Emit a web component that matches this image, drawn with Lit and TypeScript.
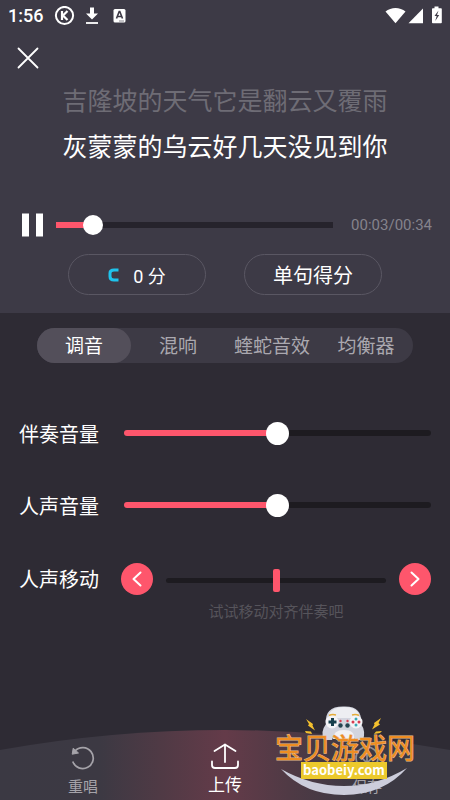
import { LitElement, html, css } from "lit";
import { customElement, property, state } from "lit/decorators.js";
import { classMap } from "lit/directives/class-map.js";
import { styleMap } from "lit/directives/style-map.js";

const base = css`
  :host {
    display: block;
    font-family: Roboto, "Noto Sans CJK SC", sans-serif;
    color: #fff;
  }
  * {
    box-sizing: border-box;
  }
  button {
    font: inherit;
    color: inherit;
    background: none;
    border: 0;
    padding: 0;
    cursor: pointer;
  }
  svg {
    display: block;
  }
`;

const rangeStyles = css`
  .range {
    --fill: calc(var(--thumb) / 2 + (100% - var(--thumb)) * var(--ratio));
    appearance: none;
    -webkit-appearance: none;
    display: block;
    flex: 1;
    width: 100%;
    min-width: 0;
    height: 24px;
    margin: 0;
    background: none;
  }
  .range::-webkit-slider-runnable-track {
    height: 6px;
    border-radius: var(--round, 3px);
    background: linear-gradient(to right, #fe566c var(--fill), var(--rest) var(--fill));
  }
  .range::-webkit-slider-thumb {
    -webkit-appearance: none;
    width: var(--thumb);
    height: var(--thumb);
    margin-top: calc(3px - var(--thumb) / 2);
    border-radius: 50%;
    background: #fff;
  }
`;

@customElement("status-bar")
class StatusBar extends LitElement {
  static styles = [
    base,
    css`
      .bar {
        display: flex;
        align-items: center;
        height: 31px;
        padding: 0 8px;
      }
      .clock {
        font-size: 18px;
        font-weight: 500;
        line-height: 20px;
        width: 46px;
      }
      .right {
        margin-left: auto;
      }
    `,
  ];

  render() {
    return html`
      <div class="bar">
        <span class="clock">1:56</span>
        <svg width="74" height="20" viewBox="0 0 74 20" fill="none" stroke="#fff" aria-hidden="true">
          <circle cx="10.5" cy="9.500" r="8.600" stroke-width="2" />
          <path d="M8 5v9M13.500 5L9 9.500l4.500 4.500" stroke-width="2.200" />
          <path d="M36 1.500h4v6h4l-6 6-6-6h4z" fill="#fff" stroke="none" />
          <path d="M32 17h12" stroke-width="1.800" />
          <rect x="59.500" y="3" width="12" height="13.500" rx="1.500" fill="#fff" stroke="none" />
          <path d="M62.500 12.500l2.700-7h.6l2.700 7M63.600 10.500h3.800" stroke="#3d3a46" stroke-width="1.600" />
          <path d="M65 15h5" stroke="#8b8991" stroke-width="1" />
        </svg>
        <svg class="right" width="58" height="20" viewBox="0 0 58 20" fill="#fff" aria-hidden="true">
          <path d="M1.500 5.500C7 .8 16 .8 21.500 5.500L11.500 17.200z" />
          <path d="M39 2.500V17.200H24.500z" />
          <path d="M50.500 .5h4v1.700H57q.8 0 .8.800V16.500q0 .8-.8.800h-8.200q-.8 0-.8-.8V3q0-.8.800-.8h1.700z" />
          <path d="M54.500 4.500l-4 5.500h2.200l-1.500 5 4-6h-2.200z" fill="#3d3a46" />
        </svg>
      </div>
    `;
  }
}

@customElement("song-player")
class SongPlayer extends LitElement {
  @state() position = 3.6;
  duration = 34;

  static styles = [
    base,
    rangeStyles,
    css`
      .player {
        display: flex;
        align-items: center;
        height: 24px;
        padding: 0 18px 0 22px;
      }
      .pause {
        width: 21px;
        margin-right: 13px;
      }
      .seek {
        --thumb: 20px;
        --round: 0;
        --rest: #26232c;
      }
      .time {
        margin-left: 18px;
        font-size: 15px;
        line-height: 20px;
        color: #85838c;
      }
    `,
  ];

  private clock(seconds: number) {
    const s = Math.floor(seconds);
    return `${String(Math.floor(s / 60)).padStart(2, "0")}:${String(s % 60).padStart(2, "0")}`;
  }

  render() {
    return html`
      <div class="player">
        <button class="pause" aria-label="暂停">
          <svg width="21" height="24" viewBox="0 0 21 24" fill="#fff"><path d="M0 .5h7v23H0zM14 .5h7v23h-7z" /></svg>
        </button>
        <input
          class="range seek"
          type="range"
          aria-label="播放进度"
          min="0"
          max=${this.duration}
          step="0.1"
          .value=${String(this.position)}
          style=${styleMap({ "--ratio": String(this.position / this.duration) })}
          @input=${(e: Event) => (this.position = Number((e.target as HTMLInputElement).value))}
        />
        <span class="time">${this.clock(this.position)}/${this.clock(this.duration)}</span>
      </div>
    `;
  }
}

@customElement("volume-row")
class VolumeRow extends LitElement {
  @property() label = "";
  @state() value = 50;

  static styles = [
    base,
    rangeStyles,
    css`
      .row {
        display: flex;
        align-items: center;
        gap: 25px;
        height: 32px;
      }
      .name {
        padding-top: 3px;
        font-size: 20px;
        line-height: 32px;
        flex: none;
      }
      .volume {
        --thumb: 23px;
        --rest: #1d1b20;
      }
    `,
  ];

  render() {
    return html`
      <div class="row">
        <label class="name" for="volume">${this.label}</label>
        <input
          id="volume"
          class="range volume"
          type="range"
          .value=${String(this.value)}
          style=${styleMap({ "--ratio": String(this.value / 100) })}
          @input=${(e: Event) => (this.value = Number((e.target as HTMLInputElement).value))}
        />
      </div>
    `;
  }
}

@customElement("voice-shift")
class VoiceShift extends LitElement {
  @state() shift = 0;

  static styles = [
    base,
    css`
      .row {
        display: grid;
        grid-template-columns: auto 32px 1fr 32px;
        column-gap: 13px;
        row-gap: 7px;
        align-items: center;
        padding-top: 2px;
      }
      .name {
        padding-top: 2px;
        font-size: 20px;
        line-height: 30px;
        margin-right: 9px;
      }
      .step {
        width: 32px;
        height: 32px;
        border-radius: 50%;
        background: #fe566c;
      }
      .offset {
        appearance: none;
        -webkit-appearance: none;
        width: 100%;
        min-width: 0;
        height: 24px;
        margin: 2px 0 0;
        background: none;
      }
      .offset::-webkit-slider-runnable-track {
        height: 5px;
        border-radius: 3px;
        background: #1d1b20;
      }
      .offset::-webkit-slider-thumb {
        -webkit-appearance: none;
        width: 7px;
        height: 23px;
        margin-top: -9px;
        border-radius: 2px;
        background: #fe566c;
      }
      .hint {
        grid-column: 3;
        margin: 0;
        text-align: center;
        white-space: nowrap;
        font-size: 15px;
        line-height: 20px;
        color: #56545b;
      }
    `,
  ];

  render() {
    return html`
      <div class="row">
        <label class="name" for="offset">人声移动</label>
        <button class="step" aria-label="提前" @click=${() => (this.shift -= 1)}>
          <svg width="32" height="32" viewBox="0 0 32 32" fill="none" stroke="#fff" stroke-width="2" stroke-linecap="round" stroke-linejoin="round"><path d="M19.500 9.500l-7 6.500 7 6.500" /></svg>
        </button>
        <input
          id="offset"
          class="offset"
          type="range"
          min="-50"
          max="50"
          .value=${String(this.shift)}
          @input=${(e: Event) => (this.shift = Number((e.target as HTMLInputElement).value))}
        />
        <button class="step" aria-label="延后" @click=${() => (this.shift += 1)}>
          <svg width="32" height="32" viewBox="0 0 32 32" fill="none" stroke="#fff" stroke-width="2" stroke-linecap="round" stroke-linejoin="round"><path d="M12.500 9.500l7 6.500-7 6.500" /></svg>
        </button>
        <p class="hint">试试移动对齐伴奏吧</p>
      </div>
    `;
  }
}

@customElement("action-bar")
class ActionBar extends LitElement {
  static styles = [
    base,
    css`
      .bar {
        position: relative;
        height: 71px;
      }
      .arc {
        position: absolute;
        inset: 0;
        width: 100%;
        height: 100%;
      }
      .actions {
        position: relative;
        display: grid;
        grid-template-columns: repeat(3, 1fr);
        height: 100%;
        padding: 0 12px;
      }
      .action {
        display: flex;
        flex-direction: column;
        align-items: center;
        justify-content: flex-end;
        padding-bottom: 3px;
        font-size: 15px;
        line-height: 20px;
        gap: 6px;
        color: #a5a3a9;
      }
      .main {
        font-size: 17px;
        line-height: 24px;
        gap: 3px;
        color: #fff;
      }
    `,
  ];

  render() {
    return html`
      <div class="bar">
        <svg class="arc" viewBox="0 0 450 71" preserveAspectRatio="none" aria-hidden="true">
          <defs>
            <linearGradient id="glow">
              <stop offset="0" stop-color="#3b3943" />
              <stop offset=".22" stop-color="#3c3943" />
              <stop offset=".36" stop-color="#503a45" />
              <stop offset=".5" stop-color="#643b49" />
              <stop offset=".64" stop-color="#503a45" />
              <stop offset=".8" stop-color="#3c3943" />
              <stop offset="1" stop-color="#3b3943" />
            </linearGradient>
          </defs>
          <path d="M0 21Q112 1 225 1T450 21V71H0z" fill="url(#glow)" />
        </svg>
        <div class="actions">
          <button class="action">
            <svg width="26" height="26" viewBox="0 0 26 26" fill="none" stroke="#a5a3a9" stroke-width="1.700">
              <path d="M2.800 16.500A10.500 10.500 0 1 0 5 6" />
              <path d="M3.200 3.200l5.300 4.800-6.300 1.200z" fill="#a5a3a9" stroke-width="1" />
            </svg>
            <span>重唱</span>
          </button>
          <button class="action main">
            <svg width="30" height="28" viewBox="0 0 30 28" fill="none" stroke="#fff" stroke-width="1.800" stroke-linecap="round" stroke-linejoin="round">
              <path d="M15 20V2.500M4.500 9L15 2.500 25.500 9" />
              <path d="M2 19.500V23q0 3 3 3h20q3 0 3-3v-3.500" />
            </svg>
            <span>上传</span>
          </button>
          <button class="action">
            <svg width="26" height="26" viewBox="0 0 26 26" fill="none" stroke="#8f8d95" stroke-width="1.700">
              <circle cx="13" cy="13" r="11" />
              <path d="M13 6v12M8 13l5 5 5-5" />
            </svg>
            <span>保存</span>
          </button>
        </div>
      </div>
    `;
  }
}

@customElement("site-badge")
class SiteBadge extends LitElement {
  static styles = [
    base,
    css`
      .title {
        font: 400 28px "Noto Sans CJK SC", sans-serif;
        fill: #ee8d22;
        stroke: #e6b98a;
        stroke-width: 1;
        paint-order: stroke;
      }
      .domain {
        font: 700 13px "Noto Sans CJK SC", sans-serif;
        fill: #fff;
      }
    `,
  ];

  render() {
    return html`
      <svg width="144" height="96" viewBox="273 704 144 96" role="img" aria-label="宝贝游戏网 baobeiy.com">
        <path d="M281 769Q311 786 344 786T407 768Q383 795 344 795T281 769z" fill="#cccddb" />
        <path d="M326 724Q324 706 344 706.500Q363 706 361 724Q366 731 363 740H355Q352 731 343 731T332 740H324Q320 732 326 724z" fill="#d3d5df" />
        <path d="M329 714Q333 707 344 707T359 714V718H329z" fill="#edeef2" />
        <path d="M333 739Q333 730 344 730T354 739z" fill="#f2f2f4" />
        <circle cx="332" cy="722" r="6.500" fill="#f4f4f7" />
        <circle cx="356" cy="722" r="6.500" fill="#f4f4f7" />
        <path d="M329 715.500q3-1.500 7-.5M352 715q4-1 7 .5" fill="none" stroke="#e5ad3a" stroke-width="1.500" />
        <path d="M332.500 718v8M328.500 722h8" stroke="#173f4c" stroke-width="3" />
        <circle cx="356" cy="719" r="1.500" fill="#39a8b5" />
        <circle cx="356" cy="725" r="1.500" fill="#39a8b5" />
        <circle cx="353" cy="722" r="1.500" fill="#d83c50" />
        <circle cx="359" cy="722" r="1.500" fill="#d83c50" />
        <circle cx="340.500" cy="721" r="1.200" fill="#d83c50" />
        <circle cx="347.500" cy="721" r="1.200" fill="#d83c50" />
        <circle cx="340.500" cy="725.500" r="2.200" fill="#244451" />
        <circle cx="347.500" cy="725.500" r="2.200" fill="#244451" />
        <path d="M306 719l7 5-.5 1.500 2.500 5-7-5 1-1.500zM305 731l6 .5 1 2.500-6-1z" fill="#f3c02e" />
        <path d="M381 718l-7 5 .5 1.500-2.500 5 8-5-1.500-1.500zM382 731l-6 .5-2 2.500 6-1z" fill="#f3c02e" />
        <text class="title" x="275" y="759">宝贝游戏网</text>
        <rect x="301" y="762" width="86" height="17" fill="#ecc92c" />
        <text class="domain" x="344" y="775" text-anchor="middle">baobeiy.com</text>
      </svg>
    `;
  }
}

@customElement("app-root")
class AppRoot extends LitElement {
  @state() tab = 0;
  tabs = ["调音", "混响", "蝰蛇音效", "均衡器"];

  static styles = [
    base,
    css`
      .page {
        position: relative;
        display: flex;
        flex-direction: column;
        min-height: 100vh;
        background: #2e2b34;
      }
      .stage {
        padding-bottom: 18px;
        background: #3d3a46;
      }
      .close {
        display: block;
        margin: 16px 0 0 17px;
      }
      .lyrics {
        margin: 10px 0 42px;
        text-align: center;
        font-size: 25px;
        line-height: 46px;
      }
      .line {
        margin: 0;
      }
      .past {
        color: #6e6c75;
      }
      .scores {
        display: flex;
        justify-content: center;
        gap: 38px;
        margin-top: 17px;
      }
      .pill {
        display: flex;
        align-items: center;
        justify-content: center;
        gap: 14px;
        width: 138px;
        height: 41px;
        border: 1px solid #5a5763;
        border-radius: 21px;
        font-size: 20px;
      }
      .score {
        font-size: 18px;
      }
      .panel {
        flex: 1;
        padding-bottom: 24px;
      }
      .tabs {
        display: grid;
        grid-template-columns: repeat(4, 1fr);
        height: 35px;
        margin: 15px 37px 0;
        border-radius: 18px;
        background: #3d3a45;
      }
      .tab {
        padding-top: 3px;
        border-radius: 18px;
        font-size: 19px;
        line-height: 32px;
        white-space: nowrap;
        color: #aaa8af;
      }
      .active {
        background: #534f5a;
        color: #fff;
      }
      .controls {
        display: flex;
        flex-direction: column;
        gap: 40px;
        margin: 54px 19px 0;
      }
      .badge {
        position: absolute;
        right: 33px;
        bottom: 0;
      }
    `,
  ];

  render() {
    return html`
      <main class="page">
        <section class="stage">
          <status-bar></status-bar>
          <button class="close" aria-label="关闭">
            <svg width="22" height="22" viewBox="0 0 22 22" stroke="#fff" stroke-width="1.800" stroke-linecap="round"><path d="M1.500 1.500l19 19M20.500 1.500l-19 19" /></svg>
          </button>
          <div class="lyrics">
            <p class="line past">吉隆坡的天气它是翻云又覆雨</p>
            <p class="line">灰蒙蒙的乌云好几天没见到你</p>
          </div>
          <song-player></song-player>
          <div class="scores">
            <button class="pill score">
              <svg width="11" height="14" viewBox="0 0 11 14" fill="none" stroke="#1fc3ec" stroke-width="3"><path d="M10.500 2H6Q2 2 2 5v3.500Q2 12 6 12h4.500" /></svg>
              <span>0 分</span>
            </button>
            <button class="pill">单句得分</button>
          </div>
        </section>
        <section class="panel">
          <div class="tabs" role="tablist">
            ${this.tabs.map(
              (name, i) => html`<button
                class=${classMap({ tab: true, active: i === this.tab })}
                role="tab"
                aria-selected=${i === this.tab}
                @click=${() => (this.tab = i)}
              >${name}</button>`
            )}
          </div>
          <div class="controls">
            <volume-row label="伴奏音量"></volume-row>
            <volume-row label="人声音量"></volume-row>
            <voice-shift></voice-shift>
          </div>
        </section>
        <action-bar></action-bar>
        <site-badge class="badge"></site-badge>
      </main>
    `;
  }
}
